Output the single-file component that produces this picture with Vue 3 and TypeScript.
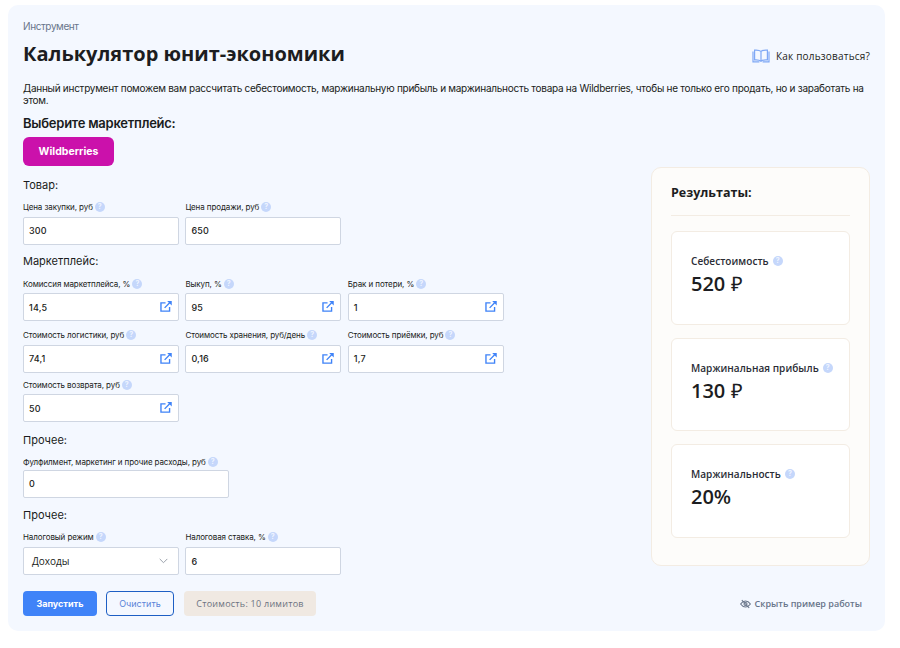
<script setup lang="ts">
interface Field { label: string; value: string; link?: boolean }
const goods: Field[] = [
  { label: 'Цена закупки, руб', value: '300' },
  { label: 'Цена продажи, руб', value: '650' },
]
const market: Field[] = [
  { label: 'Комиссия маркетплейса, %', value: '14,5', link: true },
  { label: 'Выкуп, %', value: '95', link: true },
  { label: 'Брак и потери, %', value: '1', link: true },
  { label: 'Стоимость логистики, руб', value: '74,1', link: true },
  { label: 'Стоимость хранения, руб/день', value: '0,16', link: true },
  { label: 'Стоимость приёмки, руб', value: '1,7', link: true },
  { label: 'Стоимость возврата, руб', value: '50', link: true },
]
const results = [
  { label: 'Себестоимость', value: '520 ₽' },
  { label: 'Маржинальная прибыль', value: '130 ₽' },
  { label: 'Маржинальность', value: '20%' },
]
</script>

<template>
  <div class="page">
    <main class="card">
      <div class="crumb">Инструмент</div>
      <div class="head">
        <h1>Калькулятор юнит-экономики</h1>
        <a class="how">
          <svg width="18" height="14" viewBox="0 0 18 14" fill="none" stroke="#7fa8f5" stroke-width="1.2">
            <path d="M9 2.4C7.6 1.2 5 .9 2.6 1.1v9.8c2.4-.2 5 .1 6.4 1.3 1.4-1.2 4-1.5 6.4-1.3V1.1C13 .9 10.4 1.2 9 2.4zM9 2.4v9.8" />
            <path d="M1 2.6v10.2h6.4M17 2.6v10.2h-6.4" />
          </svg>
          <span>Как пользоваться?</span>
        </a>
      </div>
      <p class="desc">Данный инструмент поможем вам рассчитать себестоимость, маржинальную прибыль и маржинальность товара на Wildberries, чтобы не только его продать, но и заработать на этом.</p>
      <h2>Выберите маркетплейс:</h2>
      <button class="wb">Wildberries</button>

      <div class="body">
        <section class="form">
          <h3>Товар:</h3>
          <div class="grid">
            <div v-for="f in goods" :key="f.label" class="field">
              <label>{{ f.label }}<i class="q">?</i></label>
              <div class="input">{{ f.value }}</div>
            </div>
          </div>

          <h3 class="mt">Маркетплейс:</h3>
          <div class="grid market">
            <div v-for="f in market" :key="f.label" class="field">
              <label>{{ f.label }}<i class="q">?</i></label>
              <div class="input">
                {{ f.value }}
                <svg class="ext" width="12" height="11" viewBox="0 0 13 12" fill="none" stroke="#3f83f8" stroke-width="1.5">
                  <path d="M6 2H1v9h9.400V6.500" />
                  <path d="M5 7.500 10.500 2" />
                  <path d="M7.800 0h5v5z" fill="#3f83f8" stroke="none" />
                </svg>
              </div>
            </div>
          </div>

          <h3 class="mt3">Прочее:</h3>
          <div class="field wide">
            <label>Фулфилмент, маркетинг и прочие расходы, руб<i class="q">?</i></label>
            <div class="input">0</div>
          </div>

          <h3 class="mt2">Прочее:</h3>
          <div class="grid tax">
            <div class="field">
              <label>Налоговый режим<i class="q">?</i></label>
              <div class="input select">
                Доходы
                <svg width="9" height="6" viewBox="0 0 9 6" fill="none" stroke="#9aa1ab" stroke-width="1"><path d="M.7.9 4.500 4.700 8.300.9" /></svg>
              </div>
            </div>
            <div class="field">
              <label>Налоговая ставка, %<i class="q">?</i></label>
              <div class="input">6</div>
            </div>
          </div>

          <div class="actions">
            <button class="run">Запустить</button>
            <button class="clear">Очистить</button>
            <span class="cost">Стоимость: 10 лимитов</span>
          </div>
        </section>

        <aside class="side">
          <div class="panel">
            <div class="ptitle">Результаты:</div>
            <div v-for="r in results" :key="r.label" class="res">
              <div class="rlabel">{{ r.label }}<i class="q rq">?</i></div>
              <div class="rvalue">{{ r.value }}</div>
            </div>
          </div>
          <a class="hide">
            <svg width="11" height="10" viewBox="0 0 11 10" fill="none" stroke="#68758a" stroke-width="1.1">
              <path d="M.6 5C2 3 3.600 2 5.500 2s3.500 1 4.900 3c-1.400 2-3 3-4.900 3S2 7 .6 5z" />
              <circle cx="5.500" cy="5" r="1.500" />
              <path d="M1.800 1 9.200 9" />
            </svg>
            Скрыть пример работы
          </a>
        </aside>
      </div>
    </main>
  </div>
</template>

<style>
html, body { margin: 0; background: #fff; }
</style>

<style scoped>
.page { padding: 5px 15px 17px 8px; width: 877px; box-sizing: content-box; }
.card {
  background: #f4f8ff;
  border-radius: 10px;
  height: 626px;
  box-sizing: border-box;
  padding: 15px;
  font-family: "Inter", "Liberation Sans", sans-serif;
  color: #1a1c20;
  display: flex;
  flex-direction: column;
}
.crumb { font-size: 10px; line-height: 12px; letter-spacing: -.4px; color: #68758a; }
.head { display: flex; justify-content: space-between; align-items: center; margin-top: 8px; height: 28px; }
h1 { margin: 0; font: 700 20px/28px "Open Sans", sans-serif; color: #1c1d21; }
.how { display: flex; align-items: center; gap: 6px; font: 400 10px/14px "Open Sans", sans-serif; color: #1c1d21; letter-spacing: .2px; margin-top: 4px; }
.desc { margin: 14px 0 0; font-size: 10px; line-height: 12px; letter-spacing: -.265px; color: #1a1c20; }
h2 { margin: 7px 0 0; font-size: 13px; line-height: 20px; font-weight: 600; letter-spacing: -.25px; }
.wb {
  display: block; margin-top: 4px; width: 91px; height: 29px; border: 0; border-radius: 6px;
  background: #cb11ab; color: #fff; font: 700 10.500px/29px "Inter", sans-serif; padding: 0;
}
.body { flex: 1; display: flex; justify-content: space-between; min-height: 0; margin-top: 1px; }
.form { padding-top: 11px; width: 481px; }
h3 { margin: 0; font-size: 11px; line-height: 14px; font-weight: 400; }
.mt { margin-top: 9px; }
.mt2 { margin-top: 10px; }
.mt3 { margin-top: 11px; }
.grid { display: grid; grid-template-columns: repeat(3, 156px); column-gap: 6.400px; }
.field { margin-top: 9px; }
.market .field { margin-top: 10px; }
.market .field:nth-child(n+4) { margin-top: 8px; }
.market .field:nth-child(n+7) { margin-top: 6px; }
.wide { width: 206px; }
.wide label { margin-bottom: 1.500px; }
.tax label { margin-bottom: 4.500px; }
label { display: flex; align-items: center; height: 12px; font-size: 8px; line-height: 12px; letter-spacing: -.1px; white-space: nowrap; margin-bottom: 3.500px; }
.q {
  display: inline-flex; align-items: center; justify-content: center;
  width: 10px; height: 10px; border-radius: 50%; margin-left: 2px;
  background: #c5d7fb; color: #f0f5ff; font: 700 7px/10px "Inter", sans-serif; letter-spacing: 0;
}
.input {
  box-sizing: border-box; height: 28px; background: #fff; border: 1px solid #cfd6e2; border-radius: 2px;
  display: flex; align-items: center; justify-content: space-between; padding: 0 9px 0 5px;
  font-size: 9px; font-weight: 500; letter-spacing: .15px; color: #1a1c20;
}
.ext { margin-right: -3px; margin-top: -1px; }
.select { font: 400 10px/14px "Open Sans", sans-serif; padding: 0 10px 0 8px; letter-spacing: 0; }
.actions { display: flex; align-items: center; margin-top: 16px; }
.run, .clear, .cost { box-sizing: border-box; height: 25px; border-radius: 4px; font-size: 9px; padding: 0; }
.run { width: 74px; background: #3f83f8; border: 0; color: #fff; font-family: "Inter", sans-serif; font-weight: 700; }
.clear { width: 68px; margin-left: 9px; background: transparent; border: 1px solid #1d5fc4; color: #5b83d8; font-family: "Inter", sans-serif; }
.cost { width: 132px; margin-left: 10px; background: #f0e9e2; color: #6c7280; font: 400 9px/25px "Open Sans", sans-serif; text-align: center; letter-spacing: .25px; }
.side { width: 219px; display: flex; flex-direction: column; justify-content: space-between; }
.panel { box-sizing: border-box; width: 219px; height: 399px; background: #fdfcfa; border: 1px solid #f3ece3; border-radius: 10px; padding: 0 19px; font-family: "Open Sans", sans-serif; }
.ptitle { height: 47px; line-height: 50px; font-size: 12.500px; font-weight: 700; border-bottom: 1px solid #f3ece3; color: #1c1d21; margin-bottom: 15px; }
.res { box-sizing: border-box; height: 93.500px; margin-bottom: 13px; background: #fff; border: 1px solid #f3ece3; border-radius: 6px; padding: 20px 0 0 19px; }
.rlabel { display: flex; align-items: center; white-space: nowrap; font-size: 10px; line-height: 18px; font-weight: 600; letter-spacing: .05px; color: #2a2c35; }
.rq { margin-left: 4px; }
.rvalue { font-size: 20px; line-height: 27px; font-weight: 550; color: #1c1d21; }
.hide { display: flex; align-items: center; justify-content: flex-end; gap: 4px; height: 18px; padding-right: 8px; margin-bottom: 3px; font: 600 9px/18px "Open Sans", sans-serif; color: #68758a; }
</style>
